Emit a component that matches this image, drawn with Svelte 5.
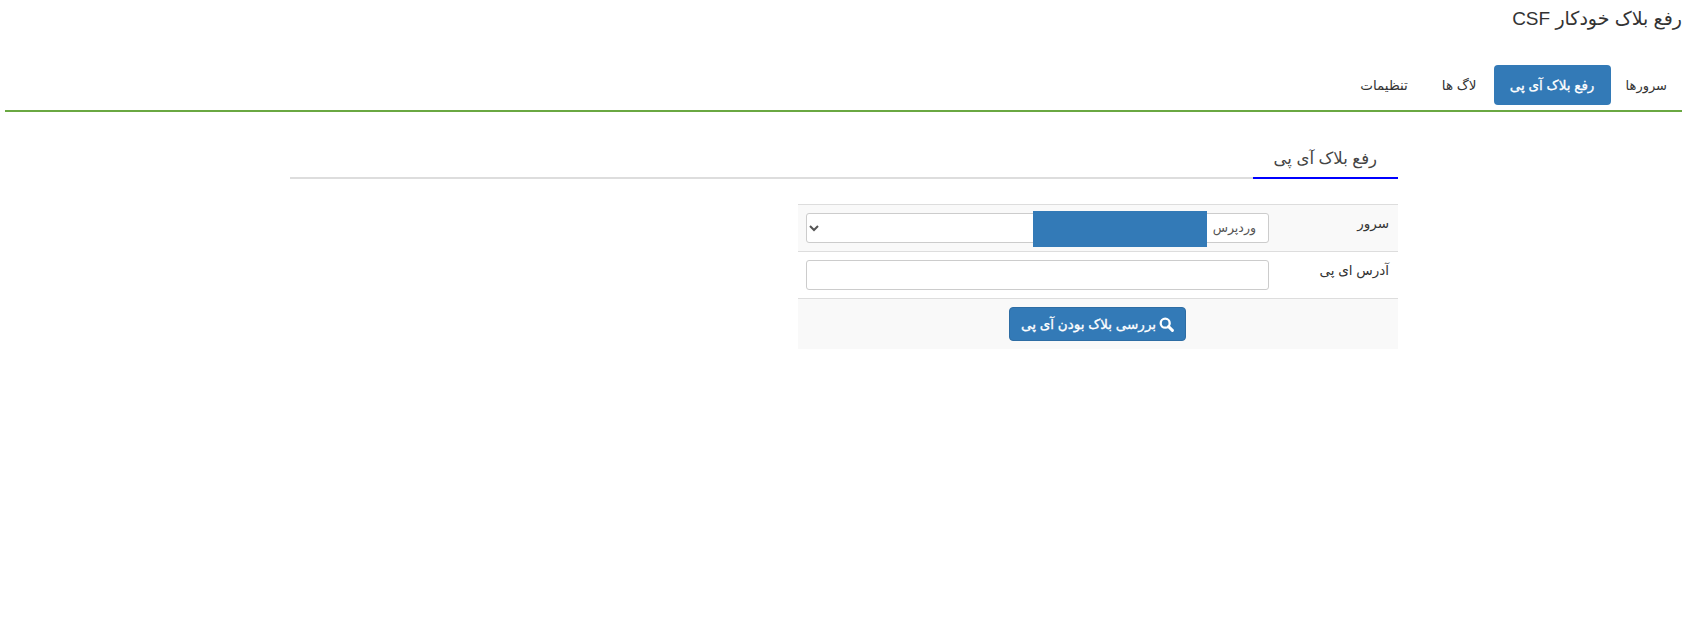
<script>
    let ip = "";
    let server = "wp";
</script>

<style>
    :global(body) {
        background: #fff;
        color: #333;
        font-family: "Liberation Sans", "DejaVu Sans", sans-serif;
        font-size: 14px;
    }

    .page {
        direction: rtl;
        padding: 0 13px 0 13px;
        height: 621px;
        box-sizing: border-box;
    }

    .title {
        margin: 0;
        padding-top: 6px;
        height: 65px;
        box-sizing: border-box;
        font-size: 19px;
        font-weight: 400;
        line-height: 26px;
        color: #333;
    }

    .tabs {
        display: flex;
        gap: 2px;
        margin: 0 0 0 -8px;
        padding: 0 0 5px;
        list-style: none;
        border-bottom: 2px solid #6aa842;
    }

    .tab {
        height: 40px;
        padding: 0 15px;
        display: flex;
        align-items: center;
        border-radius: 4px;
        color: #333;
        font-size: 13.5px;
        white-space: nowrap;
    }

    .tab:first-child {
        padding-left: 13px;
        font-size: 13px;
    }

    .tab:nth-child(3) {
        margin-left: 2px;
    }

    .tab.active {
        background: #337ab7;
        color: #fff;
        font-size: 13.5px;
        -webkit-text-stroke: 0.3px #fff;
        width: 117px;
        box-sizing: border-box;
        padding: 0;
        justify-content: center;
    }

    .content {
        margin: 0 284px 0 277px;
    }

    .section-head {
        margin-top: 31px;
        border-bottom: 2px solid #ddd;
        height: 34px;
    }

    .section-tab {
        display: inline-block;
        width: 145px;
        height: 36px;
        box-sizing: border-box;
        padding-right: 21px;
        border-bottom: 2px solid #00f;
        font-size: 16.5px;
        line-height: 30px;
        color: #444;
        white-space: nowrap;
    }

    .form {
        position: relative;
        width: 600px;
        margin-top: 25px;
    }

    .row {
        display: flex;
        border-top: 1px solid #ddd;
        padding: 8px;
        height: 47px;
        box-sizing: border-box;
    }

    .row.striped {
        background: #f9f9f9;
    }

    .label {
        width: 121px;
        flex: none;
        padding-right: 1px;
        box-sizing: border-box;
        line-height: 22px;
        font-size: 13.5px;
    }

    .field {
        width: 463px;
        height: 30px;
        box-sizing: border-box;
        border: 1px solid #ccc;
        border-radius: 3px;
        background: #fff;
        color: #555;
        font-family: inherit;
        font-size: 12.5px;
        padding: 0 8px;
    }

    .actions {
        justify-content: center;
        height: 51px;
    }

    .btn {
        display: flex;
        align-items: center;
        justify-content: center;
        gap: 3px;
        width: 177px;
        height: 34px;
        margin-right: 1px;
        box-sizing: border-box;
        background: #337ab7;
        border: 1px solid #2e6da4;
        border-radius: 4px;
        color: #fff;
        font-family: inherit;
        font-size: 13.5px;
        -webkit-text-stroke: 0.3px #fff;
        white-space: nowrap;
    }

    .mask {
        position: absolute;
        top: 7px;
        left: 235px;
        width: 174px;
        height: 36px;
        background: #337ab7;
    }
</style>

<div class="page">
    <h1 class="title">رفع بلاک خودکار CSF</h1>

    <ul class="tabs">
        <li class="tab">سرورها</li>
        <li class="tab active">رفع بلاک آی پی</li>
        <li class="tab">لاگ ها</li>
        <li class="tab">تنظیمات</li>
    </ul>

    <div class="content">
        <div class="section-head">
            <span class="section-tab">رفع بلاک آی پی</span>
        </div>

        <div class="form">
            <div class="row striped">
                <div class="label">سرور</div>
                <select class="field" bind:value={server}>
                    <option value="wp">وردپرس</option>
                </select>
            </div>
            <div class="row">
                <div class="label">آدرس ای پی</div>
                <input class="field" type="text" bind:value={ip} />
            </div>
            <div class="row striped actions">
                <button class="btn" type="button">
                    <svg width="15" height="15" viewBox="0 0 15 15" aria-hidden="true">
                        <circle cx="6.2" cy="6.2" r="4.5" fill="none" stroke="#fff" stroke-width="2.3" />
                        <path d="M9.6 9.6L13.4 13.4" stroke="#fff" stroke-width="2.9" stroke-linecap="round" />
                    </svg>
                    بررسی بلاک بودن آی پی
                </button>
            </div>
            <div class="mask"></div>
        </div>
    </div>
</div>
